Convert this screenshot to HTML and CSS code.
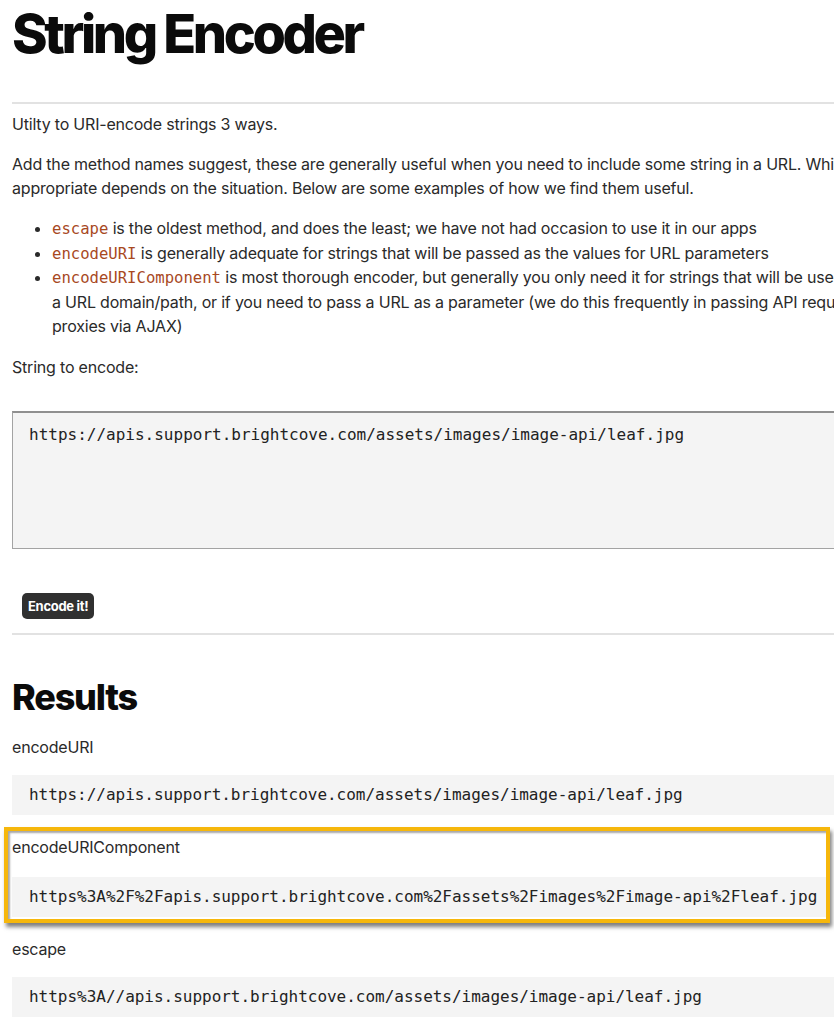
FILE: index.html
```html
<!DOCTYPE html>
<html lang="en">
<head>
<meta charset="utf-8">
<title>String Encoder</title>
<link rel="stylesheet" href="styles.css">
</head>
<body>
<main class="page">
  <h1 class="title">String Encoder</h1>
  <hr class="rule rule-top">
  <p class="text">Utilty to URI-encode strings 3 ways.</p>
  <p class="text">Add the method names suggest, these are generally useful when you need to include some string in a URL. Which is most<br>appropriate depends on the situation. Below are some examples of how we find them useful.</p>
  <ul class="methods">
    <li><code class="inline">escape</code> is the oldest method, and does the least; we have not had occasion to use it in our apps</li>
    <li><code class="inline">encodeURI</code> is generally adequate for strings that will be passed as the values for URL parameters</li>
    <li><code class="inline">encodeURIComponent</code> is most thorough encoder, but generally you only need it for strings that will be used in<br>a URL domain/path, or if you need to pass a URL as a parameter (we do this frequently in passing API requests to<br>proxies via AJAX)</li>
  </ul>
  <p class="text">String to encode:</p>
  <div class="field">
    <textarea class="input" spellcheck="false">https://apis.support.brightcove.com/assets/images/image-api/leaf.jpg</textarea>
  </div>
  <div class="actions">
    <button class="btn" type="button">Encode it!</button>
  </div>
  <hr class="rule rule-mid">
  <h2 class="subtitle">Results</h2>
  <p class="text label">encodeURI</p>
  <pre class="result">https://apis.support.brightcove.com/assets/images/image-api/leaf.jpg</pre>
  <div class="highlight">
    <p class="text label">encodeURIComponent</p>
    <pre class="result">https%3A%2F%2Fapis.support.brightcove.com%2Fassets%2Fimages%2Fimage-api%2Fleaf.jpg</pre>
  </div>
  <p class="text label">escape</p>
  <pre class="result">https%3A//apis.support.brightcove.com/assets/images/image-api/leaf.jpg</pre>
</main>
</body>
</html>
```
FILE: styles.css
```css
html, body {
  margin: 0;
  padding: 0;
  overflow: hidden;
  background: #ffffff;
}

.page {
  width: 1100px;
  padding: 0 12px;
  font-family: Inter, "Noto Sans", "Liberation Sans", sans-serif;
  font-size: 16px;
  line-height: 24px;
  letter-spacing: -0.2px;
  color: #2a2a2a;
}

.title {
  margin: 2px 0 0;
  font-size: 54px;
  line-height: 64px;
  font-weight: 800;
  letter-spacing: -3.4px;
  color: #0b0b0b;
}

.rule {
  border: 0;
  height: 2px;
  background: #e2e2e2;
  margin: 0;
}

.rule-top {
  margin-top: 36px;
}

.rule-mid {
  margin-top: 14px;
}

.text {
  margin: 16px 0;
}

.rule-top + .text {
  margin-top: 8px;
}

.methods {
  margin: 16px 0;
  padding-left: 40px;
}

.methods li {
  line-height: 24.6px;
}

.inline {
  font-family: "DejaVu Sans Mono", "Liberation Mono", monospace;
  font-size: 15.6px;
  line-height: 16px;
  letter-spacing: 0;
  color: #a8491f;
}

.field {
  margin-top: 32px;
}

.input {
  display: block;
  box-sizing: border-box;
  width: 100%;
  height: 138px;
  margin: 0;
  padding: 10px 16px;
  border: 1px solid #a3a3a3;
  border-top: 2px solid #8f8f8f;
  background: #f4f4f4;
  font-family: "DejaVu Sans Mono", "Liberation Mono", monospace;
  font-size: 16px;
  line-height: 24px;
  color: #222;
  resize: none;
  outline: none;
}

.actions {
  margin-top: 44px;
  padding-left: 10px;
}

.btn {
  display: block;
  height: 26px;
  padding: 0 6px;
  border: 0;
  border-radius: 5px;
  background: #303030;
  color: #ffffff;
  font-family: Inter, "Noto Sans", sans-serif;
  font-size: 13px;
  font-weight: 700;
  letter-spacing: -0.3px;
}

.subtitle {
  margin: 40px 0 0;
  font-size: 36px;
  line-height: 44px;
  font-weight: 800;
  letter-spacing: -1.2px;
  color: #0b0b0b;
}

.label {
  margin: 16px 0;
}

.result {
  margin: 0;
  padding: 8px 17px;
  background: #f4f4f4;
  font-family: "DejaVu Sans Mono", "Liberation Mono", monospace;
  font-size: 16px;
  line-height: 24px;
  letter-spacing: -0.02px;
  color: #222;
}

.highlight {
  box-sizing: border-box;
  width: 826px;
  margin: 12px 0 0 -8px;
  padding: 4px 0 2px 4px;
  border: 4px solid #f6b70c;
  overflow: hidden;
  box-shadow: inset 2px 2px 2px rgba(0, 0, 0, 0.35), 2px 4px 4px rgba(0, 0, 0, 0.5);
}

.highlight .label {
  margin: 0 0 18px;
}

.highlight + .label {
  margin-top: 14px;
}
```
